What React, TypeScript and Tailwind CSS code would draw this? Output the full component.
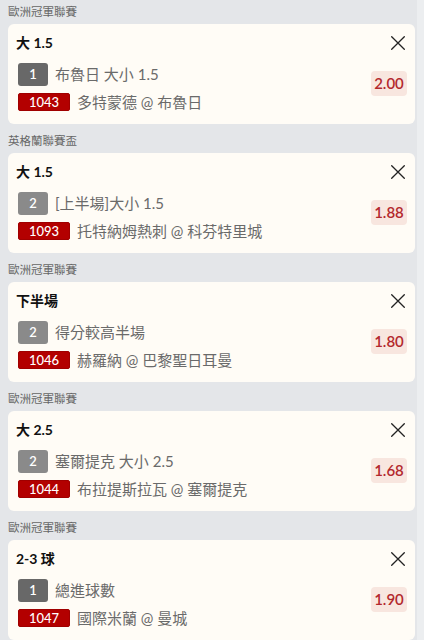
import React from "react";

type Bet = {
  league: string;
  title: string;
  num: string;
  dark: boolean;
  market: string;
  code: string;
  match: string;
  odds: string;
};

const bets: Bet[] = [
  { league: "歐洲冠軍聯賽", title: "大 1.5", num: "1", dark: true, market: "布魯日 大小 1.5", code: "1043", match: "多特蒙德 @ 布魯日", odds: "2.00" },
  { league: "英格蘭聯賽盃", title: "大 1.5", num: "2", dark: false, market: "[上半場]大小 1.5", code: "1093", match: "托特納姆熱刺 @ 科芬特里城", odds: "1.88" },
  { league: "歐洲冠軍聯賽", title: "下半場", num: "2", dark: false, market: "得分較高半場", code: "1046", match: "赫羅納 @ 巴黎聖日耳曼", odds: "1.80" },
  { league: "歐洲冠軍聯賽", title: "大 2.5", num: "2", dark: false, market: "塞爾提克 大小 2.5", code: "1044", match: "布拉提斯拉瓦 @ 塞爾提克", odds: "1.68" },
  { league: "歐洲冠軍聯賽", title: "2-3 球", num: "1", dark: true, market: "總進球數", code: "1047", match: "國際米蘭 @ 曼城", odds: "1.90" },
];

function CloseIcon() {
  return (
    <svg width="14" height="14" viewBox="0 0 14 14" fill="none">
      <path d="M0.7 0.7 L13.3 13.3 M13.3 0.7 L0.7 13.3" stroke="#222" strokeWidth="1.3" strokeLinecap="round" />
    </svg>
  );
}

function Card({ b, first }: { b: Bet; first: boolean }) {
  return (
    <div className={first ? "" : "mt-[5px]"}>
      <div className="h-[24px] flex items-center text-[11.5px] text-[#666] leading-none">{b.league}</div>
      <div className="h-[100px] bg-[#fffcf6] rounded-[6px] pl-[8px] pr-[8px] pt-[9px]">
        <div className="h-[20px] flex items-center justify-between pr-[2px]">
          <span className="text-[14px] font-bold text-[#111] leading-none">{b.title}</span>
          <CloseIcon />
        </div>
        <div className="mt-[10px] flex items-start justify-between">
          <div className="flex flex-col gap-[7px] ml-[2px]">
            <div className="flex items-center h-[23px]">
              <span
                className={`w-[30px] h-[23px] rounded-[3px] flex items-center justify-center text-white text-[13px] font-semibold leading-none ${
                  b.dark ? "bg-[#686868]" : "bg-[#8a8a8a]"
                }`}
              >
                {b.num}
              </span>
              <span className="ml-[7px] text-[15px] text-[#6a6a6a] leading-none">{b.market}</span>
            </div>
            <div className="flex items-center h-[18px]">
              <span className="w-[52px] h-[18px] rounded-[2px] bg-[#b30000] border border-[#a00000] flex items-center justify-center text-white text-[13px] font-medium leading-none">
                {b.code}
              </span>
              <span className="ml-[7px] text-[15px] text-[#6a6a6a] leading-none">{b.match}</span>
            </div>
          </div>
          <div className="mt-[8px] w-[36px] h-[25px] rounded-[4px] bg-[#f8e6df] flex items-center justify-center text-[15px] font-semibold text-[#b3282d] leading-none">
            {b.odds}
          </div>
        </div>
      </div>
    </div>
  );
}

export default function App() {
  return (
    <div
      className="w-[424px] h-[640px] overflow-hidden flex bg-[#e4e6e9]"
      style={{ fontFamily: '"Lato", "Noto Sans CJK TC", sans-serif' }}
    >
      <div className="w-[417px] pl-[8px] pr-[2px]">
        {bets.map((b, i) => (
          <Card key={i} b={b} first={i === 0} />
        ))}
      </div>
      <div className="w-[7px] h-full bg-[#eceef0]" />
    </div>
  );
}
